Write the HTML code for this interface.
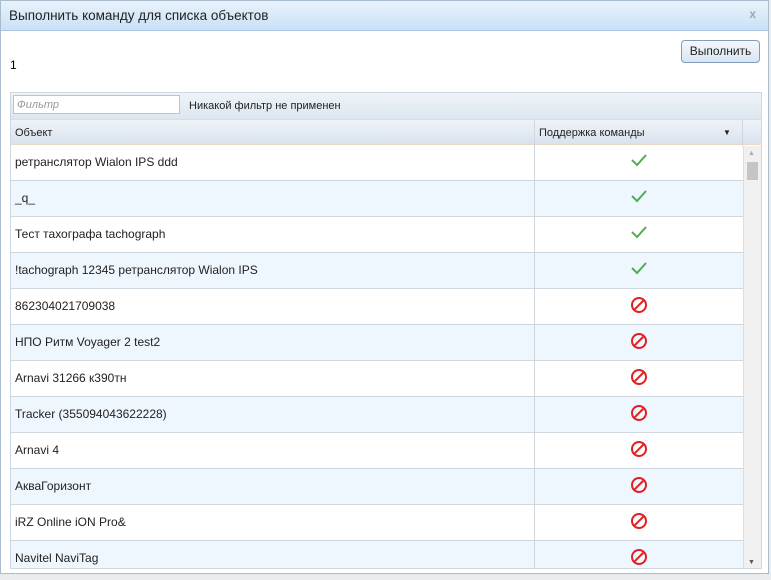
<!DOCTYPE html>
<html><head><meta charset="utf-8"><style>
*{box-sizing:border-box;margin:0;padding:0}
body{width:771px;height:580px;background:#e8ecef;font-family:"Liberation Sans",sans-serif;position:relative;overflow:hidden}
.dlg{position:absolute;left:0;top:0;width:769px;height:574px;background:#fff;border:1px solid #a9bccf}
.title{height:30px;background:linear-gradient(#e9f3fc,#c9e0f5);border-bottom:1px solid #a9c7e3;font-size:13.5px;color:#222;padding:7px 0 0 8px;position:relative}
.x{position:absolute;right:12px;top:6px;color:#9aa;font-size:12px;font-weight:bold}
.btn{position:absolute;left:680px;top:39px;width:79px;height:23px;border:1px solid #7f9db9;border-radius:4px;background:linear-gradient(#f4f8fc,#d8e5f2);font-size:12px;text-align:center;line-height:21px;color:#222}
.one{position:absolute;left:9px;top:57px;font-size:12px}
.grid{position:absolute;left:9px;top:91px;width:752px;height:477px;border:1px solid #cfd7df;overflow:hidden}
.fbar{height:26px;background:linear-gradient(#eef3f8,#dde7f0);position:relative;font-size:11px;color:#222}
.fbar input{position:absolute;left:2px;top:2px;width:167px;height:19px;border:1px solid #b8c4cf;font:italic 11px "Liberation Sans",sans-serif;padding-left:3px;color:#999}
.fbar span{position:absolute;left:178px;top:7px}
.hdr{height:26px;background:linear-gradient(#eef3f8,#d9e3ed);border-top:1px solid #d5dde5;border-bottom:1px solid #e8d8c4;position:relative;font-size:11px;color:#222}
.hdr div{position:absolute;top:7px}
.row{height:36px;border-bottom:1px solid #cfd6dd;position:relative;font-size:12px;color:#222;width:732px}
.row:nth-child(even){background:#eef6fe}
.row .t{position:absolute;left:4px;top:10px}
.row .i{position:absolute;left:619px;top:7px}
.vl{position:absolute;left:523px;top:26px;width:1px;height:460px;background:#cfd6dd}
.sb{position:absolute;left:732px;top:53px;width:18px;height:424px;background:#f0f0f0;border-left:1px solid #ddd}
</style></head><body>
<div class="dlg">
<div class="title">Выполнить команду для списка объектов<span class="x">x</span></div>
<div class="btn">Выполнить</div>
<div class="one">1</div>
<div class="grid">
<div class="fbar"><input value="Фильтр"><span>Никакой фильтр не применен</span></div>
<div class="hdr"><div style="left:4px">Объект</div><div style="left:528px">Поддержка команды</div><div style="left:712px;font-size:8px;top:8px">▼</div><div style="position:absolute;left:731px;top:0;width:1px;height:26px;background:#cfd6dd"></div></div>
<div id="rows"></div>
<div class="vl"></div>
<div class="sb"><div style="position:absolute;left:4px;top:4px;font-size:7px;color:#aaa">▲</div><div style="position:absolute;left:3px;top:16px;width:11px;height:18px;background:#c5c5c5"></div><div style="position:absolute;left:4px;bottom:4px;font-size:7px;color:#555">▼</div></div>
</div>
</div>
<script>
var n=["ретранслятор Wialon IPS ddd","_q_","Тест тахографа tachograph","!tachograph 12345 ретранслятор Wialon IPS","862304021709038","НПО Ритм Voyager 2 test2","Arnavi 31266 к390тн","Tracker (355094043622228)","Arnavi 4","АкваГоризонт","iRZ Online iON Pro&","Navitel NaviTag"];
var ok='<svg width="18" height="16" viewBox="0 0 18 16"><path d="M2 8l5 5L16 3" fill="none" stroke="#4caf50" stroke-width="2"/></svg>';
var no='<svg width="18" height="18" viewBox="0 0 18 18"><circle cx="9" cy="9" r="7" fill="none" stroke="#e02020" stroke-width="2"/><path d="M4 14L14 4" stroke="#e02020" stroke-width="2"/></svg>';
var h='';n.forEach(function(s,i){h+='<div class="row"><div class="t">'+s+'</div><div class="i">'+(i<4?ok:no)+'</div></div>';});
document.getElementById('rows').innerHTML=h;
</script>
</body></html>
